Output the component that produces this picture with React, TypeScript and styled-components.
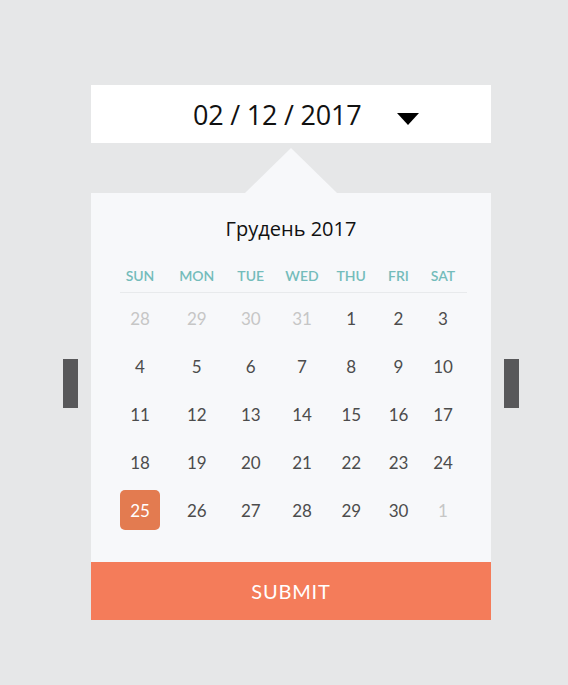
import React from "react";
import styled, { createGlobalStyle } from "styled-components";

const Global = createGlobalStyle`
  html, body { margin: 0; padding: 0; background: #e6e7e8; }
  body { font-family: "Open Sans", "Liberation Sans", sans-serif; }
`;

const Page = styled.div`
  width: 568px;
  height: 685px;
  background: #e6e7e8;
  padding: 85px 0 0 63px;
  box-sizing: border-box;
  display: flex;
  flex-direction: column;
  align-items: flex-start;
`;

const DateBox = styled.div`
  margin-left: 28px;
  width: 400px;
  height: 58px;
  background: #ffffff;
  display: flex;
  align-items: center;
  padding-left: 102px;
  gap: 35px;
  box-sizing: border-box;
`;

const DateText = styled.span`
  font-family: "Open Sans", "Liberation Sans", sans-serif;
  font-size: 27px;
  color: #111;
  line-height: 1;
  letter-spacing: -0.2px;
  margin-top: 1px;
`;

const Caret = styled.span`
  width: 0;
  height: 0;
  border-left: 11.5px solid transparent;
  border-right: 11.5px solid transparent;
  border-top: 12px solid #000;
  margin-top: 10px;
`;

const Row = styled.div`
  display: flex;
  align-items: flex-start;
  gap: 13px;
`;

const Handle = styled.div`
  width: 15px;
  height: 49px;
  margin-top: 216px;
  background: #58585a;
`;

const Popup = styled.div`
  width: 400px;
  margin-top: 5px;
  display: flex;
  flex-direction: column;
`;

const Pointer = styled.div`
  align-self: center;
  width: 92px;
  height: 45px;
  background: #f7f8fa;
  clip-path: polygon(50% 0, 100% 100%, 0 100%);
`;

const Panel = styled.div`
  background: #f7f8fa;
  padding: 22px 0 28px;
  display: flex;
  flex-direction: column;
`;

const Title = styled.div`
  text-align: center;
  font-family: "Open Sans", "Liberation Sans", sans-serif;
  font-size: 20px;
  line-height: 28px;
  color: #111;
  margin-bottom: 24px;
`;

const cols = "58px 55.5px 52.5px 50px 48.5px 46px 43px";

const WeekRow = styled.div`
  display: grid;
  grid-template-columns: ${cols};
  margin-left: 20px;
  padding-bottom: 7px;
`;

const WeekDay = styled.span`
  text-align: center;
  font-family: Lato, "Liberation Sans", sans-serif;
  font-size: 14px;
  font-weight: 600;
  line-height: 18px;
  color: #74bcbb;
`;

const Divider = styled.div`
  height: 1px;
  background: #e8eaec;
  margin: 0 24px 1px 29px;
`;

const DaysGrid = styled.div`
  display: grid;
  grid-template-columns: ${cols};
  grid-auto-rows: 48px;
  margin-left: 20px;
`;

const Day = styled.div`
  display: flex;
  align-items: center;
  justify-content: center;
`;

const DayLabel = styled.span<{ $muted?: boolean; $selected?: boolean }>`
  width: 40px;
  height: 40px;
  display: flex;
  align-items: center;
  justify-content: center;
  border-radius: 5px;
  font-family: Lato, "Liberation Sans", sans-serif;
  font-size: 17px;
  color: ${(p) => (p.$selected ? "#fff" : p.$muted ? "#c6c6c6" : "#4c4c4c")};
  background: ${(p) => (p.$selected ? "#e37b50" : "transparent")};
`;

const Submit = styled.button`
  height: 58px;
  border: none;
  background: #f47c5a;
  color: #fff;
  font-family: Lato, "Liberation Sans", sans-serif;
  font-size: 20px;
  letter-spacing: 0.8px;
  padding: 0;
  cursor: pointer;
`;

const weekDays = ["SUN", "MON", "TUE", "WED", "THU", "FRI", "SAT"];

type Cell = { n: number; muted?: boolean; selected?: boolean };

const days: Cell[] = [
  { n: 28, muted: true },
  { n: 29, muted: true },
  { n: 30, muted: true },
  { n: 31, muted: true },
  ...Array.from({ length: 30 }, (_, i) => ({ n: i + 1, selected: i + 1 === 25 })),
  { n: 1, muted: true },
];

export default function App() {
  return (
    <>
      <Global />
      <Page>
        <DateBox>
          <DateText>02 / 12 / 2017</DateText>
          <Caret />
        </DateBox>
        <Row>
          <Handle />
          <Popup>
            <Pointer />
            <Panel>
              <Title>Грудень 2017</Title>
              <WeekRow>
                {weekDays.map((d) => (
                  <WeekDay key={d}>{d}</WeekDay>
                ))}
              </WeekRow>
              <Divider />
              <DaysGrid>
                {days.map((d, i) => (
                  <Day key={i}>
                    <DayLabel $muted={d.muted} $selected={d.selected}>
                      {d.n}
                    </DayLabel>
                  </Day>
                ))}
              </DaysGrid>
            </Panel>
            <Submit>SUBMIT</Submit>
          </Popup>
          <Handle />
        </Row>
      </Page>
    </>
  );
}
